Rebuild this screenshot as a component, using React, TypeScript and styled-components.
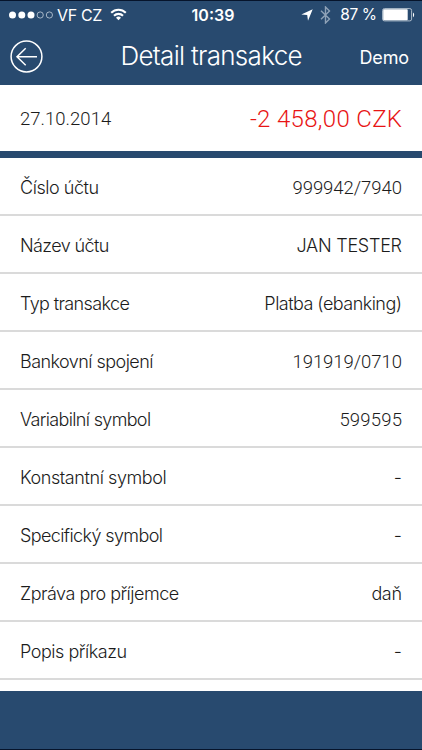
import React from 'react';
import styled, { createGlobalStyle } from 'styled-components';

const Global = createGlobalStyle`
  * { box-sizing: border-box; }
  body { margin: 0; background: #fff; }
`;

const Screen = styled.div`
  display: flex;
  flex-direction: column;
  width: 422px;
  height: 750px;
  overflow: hidden;
  background: #fff;
  color: #1c1c1c;
  font-family: Inter, 'Liberation Sans', sans-serif;
  font-weight: 300;
`;

const Text = styled.span<{ $track?: number }>`
  letter-spacing: ${p => p.$track ?? 0}px;
  margin-right: ${p => -(p.$track ?? 0)}px;
  white-space: pre;
`;

const Digits = styled(Text)`
  font-family: Roboto, 'Liberation Sans', sans-serif;
  font-size: 18.5px;
`;

const Header = styled.header`
  flex: none;
  height: 85px;
  background: #284a6f;
  border-top: 1px solid #06142b;
  color: #fff;
`;

const StatusBar = styled.div`
  display: grid;
  grid-template-columns: 1fr auto 1fr;
  align-items: center;
  height: 27px;
  padding: 0 7px 0 9px;
  font-size: 16px;
  font-weight: 400;
`;

const StatusGroup = styled.div<{ $end?: boolean }>`
  display: flex;
  align-items: center;
  justify-content: ${p => (p.$end ? 'flex-end' : 'flex-start')};
`;

const Clock = styled.div`
  font-weight: 600;
  padding-left: 2px;
`;

const Signal = styled.svg`
  margin-right: 4px;
`;

const Wifi = styled.svg`
  margin-left: 8px;
`;

const Location = styled.svg`
  margin-right: 7px;
`;

const Bluetooth = styled.svg`
  margin-right: 9px;
`;

const Percent = styled(Text)`
  font-size: 15.5px;
`;

const Battery = styled.svg`
  margin-left: 5px;
`;

const NavBar = styled.nav`
  display: grid;
  grid-template-columns: 1fr auto 1fr;
  align-items: center;
  height: 57px;
  padding: 0 13px 0 10px;
`;

const BackButton = styled.button`
  display: flex;
  width: 33px;
  height: 33px;
  padding: 0;
  border: 0;
  background: none;
`;

const Title = styled.h1`
  margin: 0;
  padding: 0 0 2px 4px;
  font-size: 26px;
  line-height: 32px;
  font-weight: 300;
`;

const UserName = styled.div`
  justify-self: end;
  padding-top: 1px;
  font-size: 18px;
  font-weight: 400;
`;

const Summary = styled.section`
  flex: none;
  display: flex;
  align-items: center;
  justify-content: space-between;
  height: 73px;
  padding: 1px 20px 0;
  border-bottom: 7px solid #284a6f;
`;

const Amount = styled(Digits)`
  color: #e81414;
  font-size: 24px;
`;

const Details = styled.dl`
  flex: 1;
  margin: 0;
`;

const Row = styled.div`
  display: flex;
  align-items: center;
  justify-content: space-between;
  height: 58px;
  padding: 3px 20px 0;
  border-bottom: 2px solid #dadada;
  font-size: 18px;
`;

const Label = styled.dt`
  margin: 0;
`;

const Value = styled.dd`
  margin: 0;
`;

const Footer = styled.footer`
  flex: none;
  height: 59px;
  background: #284a6f;
  border-bottom: 1px solid #06142b;
`;

interface Detail {
  label: string;
  labelTrack: number;
  value: string;
  valueTrack?: number;
  digits?: boolean;
}

const details: Detail[] = [
  { label: 'Číslo účtu', labelTrack: -0.45, value: '999942/7940', valueTrack: -0.04, digits: true },
  { label: 'Název účtu', labelTrack: -0.62, value: 'JAN TESTER', valueTrack: -0.26 },
  { label: 'Typ transakce', labelTrack: -0.62, value: 'Platba (ebanking)', valueTrack: -0.53 },
  { label: 'Bankovní spojení', labelTrack: -0.55, value: '191919/0710', valueTrack: -0.04, digits: true },
  { label: 'Variabilní symbol', labelTrack: -0.66, value: '599595', valueTrack: 0.2, digits: true },
  { label: 'Konstantní symbol', labelTrack: -0.42, value: '-' },
  { label: 'Specifický symbol', labelTrack: -0.61, value: '-' },
  { label: 'Zpráva pro příjemce', labelTrack: -0.5, value: 'daň', valueTrack: -0.36 },
  { label: 'Popis příkazu', labelTrack: -0.47, value: '-' },
];

export default function App() {
  return (
    <Screen>
      <Global />
      <Header>
        <StatusBar>
          <StatusGroup>
            <Signal width="44" height="8" viewBox="0 0 44 8" fill="#fff">
              {[3.5, 12.8, 22].map(x => <circle key={x} cx={x} cy="4" r="3.5" />)}
              {[31.2, 40.4].map(x => (
                <circle key={x} cx={x} cy="4" r="3.1" fill="none" stroke="#c5d0dc" strokeWidth=".8" />
              ))}
            </Signal>
            <Text $track={-0.33}>VF CZ</Text>
            <Wifi width="17" height="13" viewBox="0 0 17 13" fill="none" stroke="#fff" strokeWidth="2.1">
              <path d="M1.2 4.8a10.3 10.3 0 0 1 14.6 0" />
              <path d="M4 7.7a6.4 6.4 0 0 1 9 0" />
              <path d="M8.5 12.3 6 9.8a3.6 3.6 0 0 1 5 0Z" fill="#fff" stroke="none" />
            </Wifi>
          </StatusGroup>
          <Clock><Text>10:39</Text></Clock>
          <StatusGroup $end>
            <Location width="12" height="12" viewBox="0 0 12 12" fill="#fff">
              <path d="M11.7.3 7 11.7 6.2 6 .3 5.5Z" />
            </Location>
            <Bluetooth width="11" height="18" viewBox="0 0 11 18" fill="none" stroke="#8fa2b7" strokeWidth="1.4">
              <path d="M1 4.8 9.5 13 5.5 17V1l4 4L1 13.2" />
            </Bluetooth>
            <Percent $track={-0.4}>87 %</Percent>
            <Battery width="33" height="14" viewBox="0 0 33 14">
              <rect x=".6" y=".6" width="29" height="12.3" rx="1.8" fill="none" stroke="#aebccb" />
              <rect x="1.2" y="1.2" width="24.5" height="11.1" rx=".8" fill="#fff" />
              <path d="M31 4.5c1.6.8 1.6 3.9 0 4.7Z" fill="#fff" />
            </Battery>
          </StatusGroup>
        </StatusBar>
        <NavBar>
          <BackButton aria-label="Zpět">
            <svg width="33" height="33" viewBox="0 0 33 33" fill="none" stroke="#fff">
              <circle cx="16.5" cy="16.5" r="15.4" strokeWidth="1.5" />
              <path d="M27 16.7H7M15.7 8.2 7 16.7l8.7 8.5" strokeWidth="1.5" />
            </svg>
          </BackButton>
          <Title><Text $track={-0.7}>Detail transakce</Text></Title>
          <UserName><Text $track={-0.2}>Demo</Text></UserName>
        </NavBar>
      </Header>
      <Summary>
        <Digits $track={0.03}>27.10.2014</Digits>
        <Amount $track={0.33}>-2 458,00 CZK</Amount>
      </Summary>
      <Details>
        {details.map(d => (
          <Row key={d.label}>
            <Label><Text $track={d.labelTrack}>{d.label}</Text></Label>
            <Value>
              {d.digits
                ? <Digits $track={d.valueTrack}>{d.value}</Digits>
                : <Text $track={d.valueTrack}>{d.value}</Text>}
            </Value>
          </Row>
        ))}
      </Details>
      <Footer />
    </Screen>
  );
}
